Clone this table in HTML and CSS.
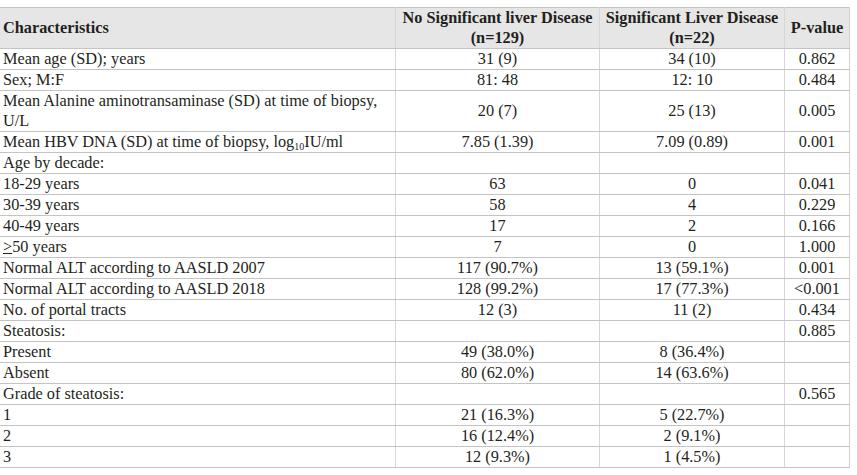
FILE: index.html
```html
<!DOCTYPE html>
<html>
<head>
<meta charset="utf-8">
<link rel="stylesheet" href="styles.css">
</head>
<body>
<table class="tbl">
  <colgroup>
    <col class="c1"><col class="c2"><col class="c3"><col class="c4">
  </colgroup>
  <thead>
    <tr>
      <th class="left">Characteristics</th>
      <th>No Significant liver Disease<br>(n=129)</th>
      <th>Significant Liver Disease<br>(n=22)</th>
      <th>P-value</th>
    </tr>
  </thead>
  <tbody>
    <tr><td>Mean age (SD); years</td><td>31 (9)</td><td>34 (10)</td><td>0.862</td></tr>
    <tr><td>Sex; M:F</td><td>81: 48</td><td>12: 10</td><td>0.484</td></tr>
    <tr><td>Mean Alanine aminotransaminase (SD) at time of biopsy,<br>U/L</td><td>20 (7)</td><td>25 (13)</td><td>0.005</td></tr>
    <tr><td>Mean HBV DNA (SD) at time of biopsy, log<sub>10</sub>IU/ml</td><td>7.85 (1.39)</td><td>7.09 (0.89)</td><td>0.001</td></tr>
    <tr><td>Age by decade:</td><td></td><td></td><td></td></tr>
    <tr><td>18-29 years</td><td>63</td><td>0</td><td>0.041</td></tr>
    <tr><td>30-39 years</td><td>58</td><td>4</td><td>0.229</td></tr>
    <tr><td>40-49 years</td><td>17</td><td>2</td><td>0.166</td></tr>
    <tr><td><span class="ge">&gt;</span>50 years</td><td>7</td><td>0</td><td>1.000</td></tr>
    <tr><td>Normal ALT according to AASLD 2007</td><td>117 (90.7%)</td><td>13 (59.1%)</td><td>0.001</td></tr>
    <tr><td>Normal ALT according to AASLD 2018</td><td>128 (99.2%)</td><td>17 (77.3%)</td><td>&lt;0.001</td></tr>
    <tr><td>No. of portal tracts</td><td>12 (3)</td><td>11 (2)</td><td>0.434</td></tr>
    <tr><td>Steatosis:</td><td></td><td></td><td>0.885</td></tr>
    <tr><td>Present</td><td>49 (38.0%)</td><td>8 (36.4%)</td><td></td></tr>
    <tr><td>Absent</td><td>80 (62.0%)</td><td>14 (63.6%)</td><td></td></tr>
    <tr><td>Grade of steatosis:</td><td></td><td></td><td>0.565</td></tr>
    <tr><td>1</td><td>21 (16.3%)</td><td>5 (22.7%)</td><td></td></tr>
    <tr><td>2</td><td>16 (12.4%)</td><td>2 (9.1%)</td><td></td></tr>
    <tr><td>3</td><td>12 (9.3%)</td><td>1 (4.5%)</td><td></td></tr>
  </tbody>
</table>
</body>
</html>
```
FILE: styles.css
```css
html, body {
  margin: 0;
  padding: 0;
  background: #ffffff;
}
body {
  padding-top: 7px;
  font-family: "Liberation Serif", "Times New Roman", serif;
  font-size: 16.3px;
  color: #231f20;
}
.tbl {
  border-collapse: collapse;
  table-layout: fixed;
  width: 849px;
  border-top: 1px solid #c4c4c4;
  border-right: 1px solid #d2d2d2;
}
.c1 { width: 395px; }
.c2 { width: 204px; }
.c3 { width: 185px; }
.c4 { width: 65px; }
.tbl th, .tbl td {
  padding: 0 2px 0 3px;
  line-height: 20px;
  border-bottom: 1px solid #c4c4c4;
  border-left: 1px solid #d6d6d6;
  text-align: center;
  vertical-align: middle;
  white-space: nowrap;
  overflow: hidden;
}
.tbl th:first-child, .tbl td:first-child {
  border-left: none;
  text-align: left;
}
.tbl th {
  background: #e6e6e6;
  font-weight: bold;
}
.tbl sub {
  font-size: 10px;
  line-height: 0;
  vertical-align: -3px;
}
.ge {
  text-decoration: underline;
  text-underline-offset: 1px;
}
```
